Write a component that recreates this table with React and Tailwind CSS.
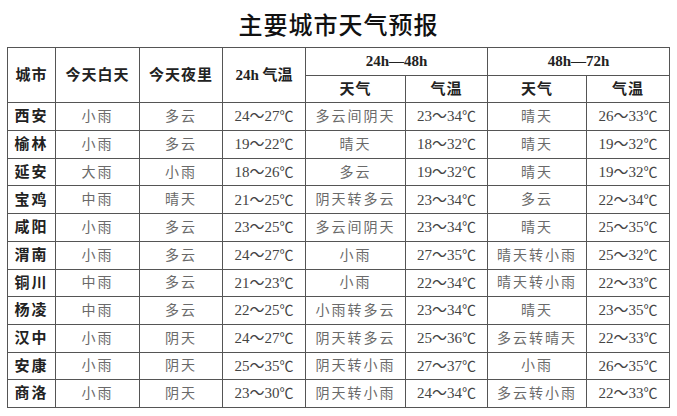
import React from "react";

const rows = [
  ["西安", "小雨", "多云", "24～27℃", "多云间阴天", "23～34℃", "晴天", "26～33℃"],
  ["榆林", "小雨", "多云", "19～22℃", "晴天", "18～32℃", "晴天", "19～32℃"],
  ["延安", "大雨", "小雨", "18～26℃", "多云", "19～32℃", "晴天", "19～32℃"],
  ["宝鸡", "中雨", "晴天", "21～25℃", "阴天转多云", "23～34℃", "多云", "22～34℃"],
  ["咸阳", "小雨", "多云", "23～25℃", "多云间阴天", "23～34℃", "晴天", "25～35℃"],
  ["渭南", "小雨", "多云", "24～27℃", "小雨", "27～35℃", "晴天转小雨", "25～32℃"],
  ["铜川", "中雨", "多云", "21～23℃", "小雨", "22～34℃", "晴天转小雨", "22～33℃"],
  ["杨凌", "中雨", "多云", "22～25℃", "小雨转多云", "23～34℃", "晴天", "23～35℃"],
  ["汉中", "小雨", "阴天", "24～27℃", "阴天转多云", "25～36℃", "多云转晴天", "22～33℃"],
  ["安康", "小雨", "阴天", "25～35℃", "阴天转小雨", "27～37℃", "小雨", "26～35℃"],
  ["商洛", "小雨", "阴天", "23～30℃", "阴天转小雨", "24～34℃", "多云转小雨", "22～33℃"],
];

const serif = { fontFamily: '"Liberation Serif", "Noto Sans CJK SC", serif' };
const cjk = { fontFamily: '"Noto Sans CJK SC", sans-serif' };

const th = "border border-[#555] h-[27.7px] p-0 text-center font-bold text-[15px] text-[#222]";
const td = "border border-[#555] h-[27.7px] p-0 text-center text-[14px] text-[#6a6a6a] tracking-[2px]";
const tdTemp = "border border-[#555] h-[27.7px] p-0 text-center text-[15px] text-[#444]";

// "24～27℃" -> numbers in serif, unit glyph from the CJK font so it stays compact
function Temp({ value }) {
  const [range] = value.split("℃");
  return (
    <>
      {range}
      <span style={cjk} className="text-[14px]">℃</span>
    </>
  );
}

export default function App() {
  return (
    <div className="w-[677px] h-[416px] bg-white overflow-hidden" style={serif}>
      <h1
        className="pt-[6px] h-[47px] text-center text-[24px] font-medium text-[#111] tracking-[1px]"
        style={cjk}
      >
        主要城市天气预报
      </h1>
      <table className="ml-[7px] border-collapse table-fixed w-[662px]">
        <colgroup>
          <col className="w-[48px]" />
          <col className="w-[84px]" />
          <col className="w-[83px]" />
          <col className="w-[83px]" />
          <col className="w-[100px]" />
          <col className="w-[82px]" />
          <col className="w-[99px]" />
          <col className="w-[83px]" />
        </colgroup>
        <thead>
          <tr>
            <th rowSpan={2} className={th + " tracking-[1px]"}>城市</th>
            <th rowSpan={2} className={th + " tracking-[1px]"}>今天白天</th>
            <th rowSpan={2} className={th + " tracking-[1px]"}>今天夜里</th>
            <th rowSpan={2} className={th}>24h 气温</th>
            <th colSpan={2} className={th}>24h—48h</th>
            <th colSpan={2} className={th}>48h—72h</th>
          </tr>
          <tr>
            <th className={th + " tracking-[1px]"}>天气</th>
            <th className={th + " tracking-[1px]"}>气温</th>
            <th className={th + " tracking-[1px]"}>天气</th>
            <th className={th + " tracking-[1px]"}>气温</th>
          </tr>
        </thead>
        <tbody>
          {rows.map((r) => (
            <tr key={r[0]}>
              <td className="border border-[#555] h-[27.7px] p-0 text-center text-[15px] font-bold text-[#222] tracking-[2px]">
                {r[0]}
              </td>
              {r.slice(1).map((c, i) =>
                c.includes("℃") ? (
                  <td key={i} className={tdTemp}>
                    <Temp value={c} />
                  </td>
                ) : (
                  <td key={i} className={td}>
                    {c}
                  </td>
                )
              )}
            </tr>
          ))}
        </tbody>
      </table>
    </div>
  );
}
